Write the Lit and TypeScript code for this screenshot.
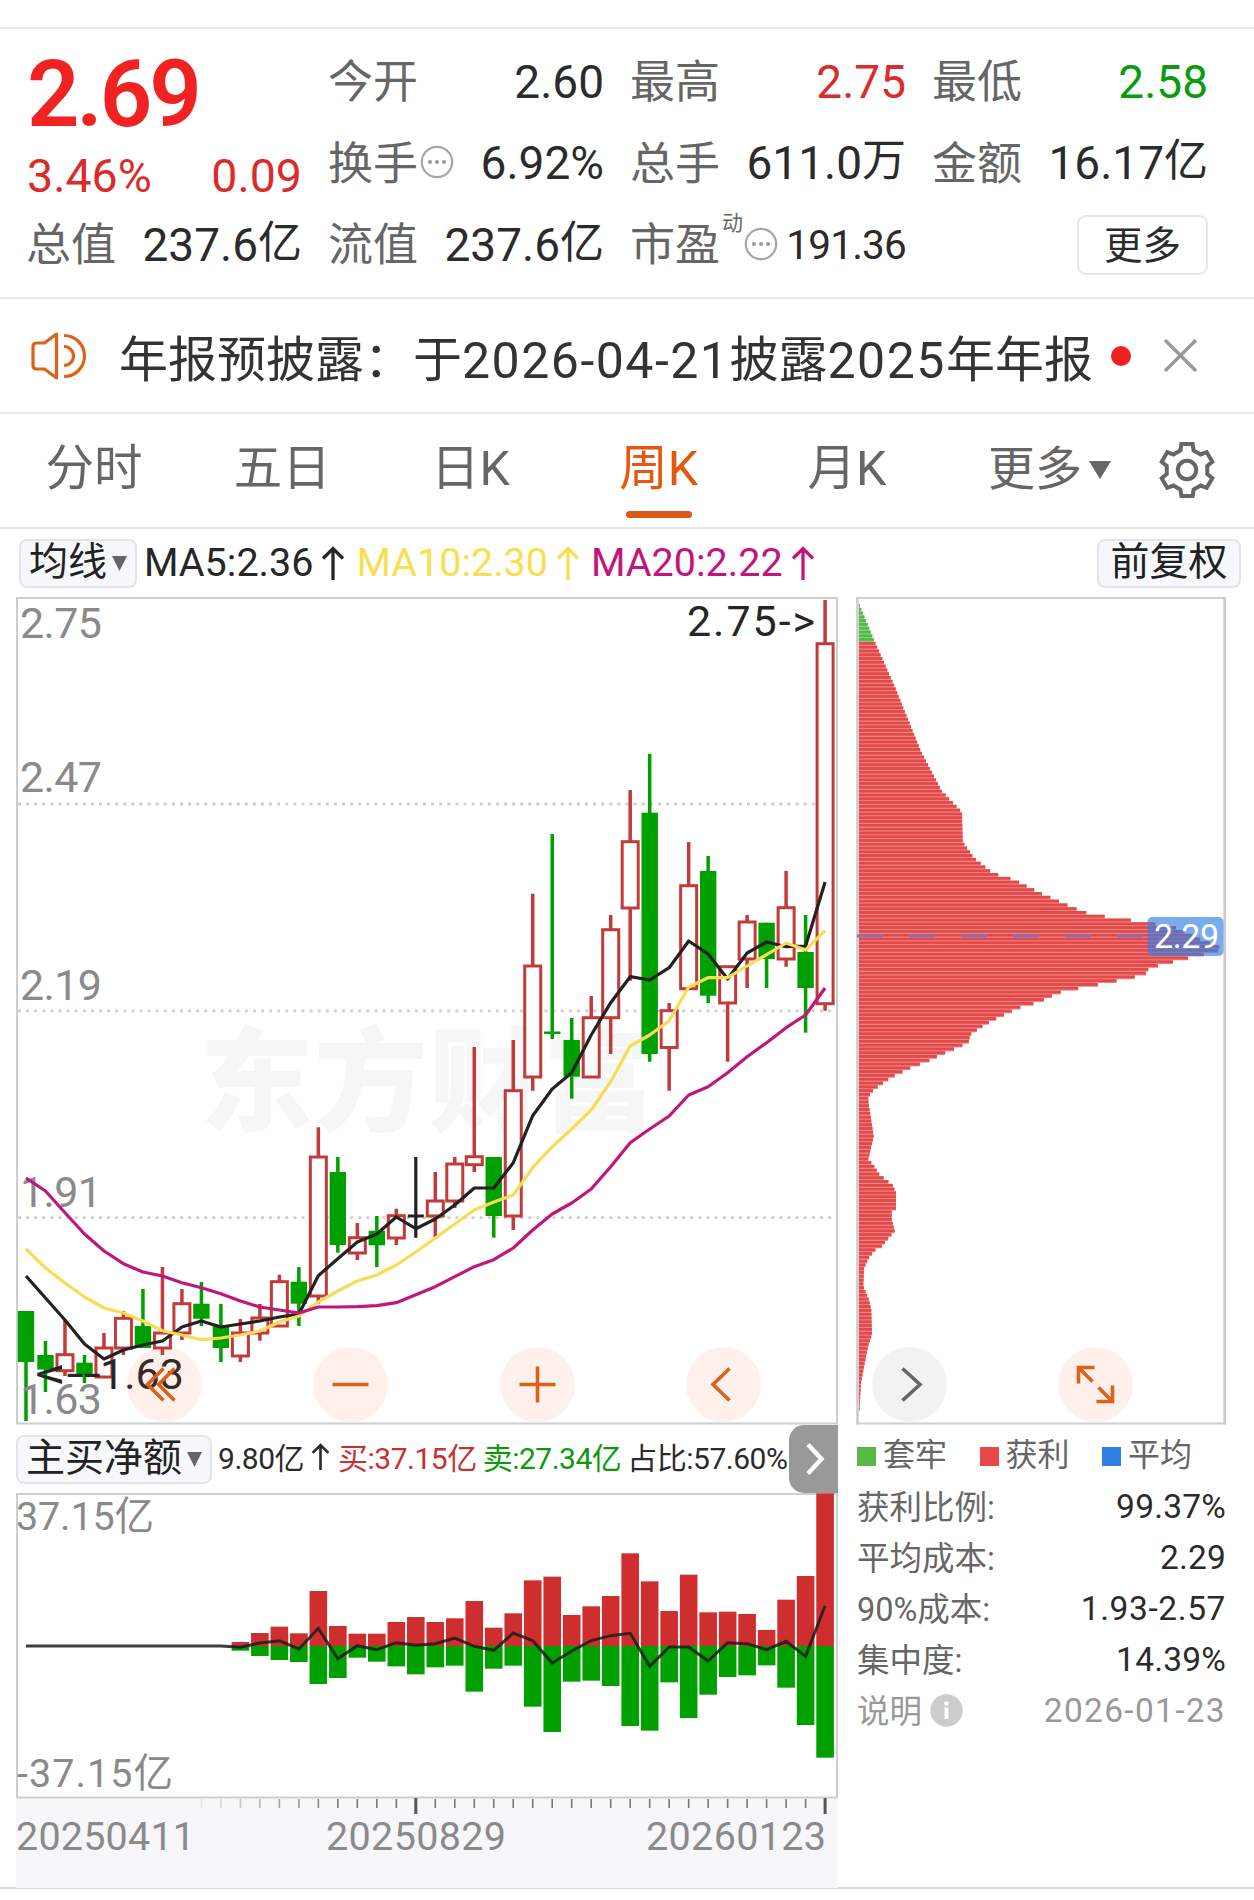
import { LitElement, html, svg, css } from "lit";
import { customElement, property } from "lit/decorators.js";

type Tone = "up" | "down" | "flat";
type Candle = [Tone, number, number, number, number];

const FIRST_X = 26;
const STEP = 19.49;
const xAt = (i: number) => FIRST_X + STEP * i;

/* tone, high, body top, body bottom, low (vertical chart units) */
const CANDLES: Candle[] = [
  ["down", 1311, 1311, 1362, 1421],
  ["down", 1341, 1355, 1369.5, 1392],
  ["up", 1320, 1354.7, 1370.7, 1376],
  ["down", 1355, 1362.7, 1376.7, 1383],
  ["up", 1333, 1348, 1377, 1377],
  ["up", 1311, 1318.3, 1348, 1355],
  ["down", 1289, 1326, 1348, 1348],
  ["up", 1267, 1333, 1348, 1355],
  ["up", 1289, 1303.7, 1333, 1340],
  ["down", 1282, 1303.7, 1318.7, 1326],
  ["down", 1304, 1326, 1348, 1362],
  ["up", 1319, 1333, 1356, 1362],
  ["up", 1304, 1318, 1333, 1340.7],
  ["up", 1274.7, 1281.7, 1326, 1326],
  ["down", 1267, 1281.7, 1303.7, 1326],
  ["up", 1127.3, 1157, 1296, 1303.7],
  ["down", 1157, 1172, 1245, 1252.7],
  ["up", 1223, 1237.7, 1253, 1260],
  ["down", 1216, 1230.7, 1245.3, 1267],
  ["up", 1208.7, 1215.7, 1238, 1245],
  ["flat", 1157, 1216, 1216, 1237.7],
  ["up", 1172, 1201, 1216, 1237.7],
  ["up", 1157, 1164, 1201, 1208],
  ["up", 1047, 1156.7, 1164.7, 1172],
  ["down", 1157, 1157, 1216, 1237.7],
  ["up", 1040, 1090.7, 1216, 1230],
  ["up", 893.7, 966, 1077, 1090.7],
  ["down", 834, 1031.5, 1034, 1039],
  ["down", 1018, 1040, 1076.7, 1098.7],
  ["up", 996, 1017.7, 1077, 1077],
  ["up", 915, 929.7, 1017.7, 1054],
  ["up", 790, 841.7, 908, 980.7],
  ["down", 753.7, 812.7, 1054, 1061.7],
  ["up", 1003, 1010.7, 1047.5, 1090.7],
  ["up", 842, 885.7, 988.7, 988.7],
  ["down", 856, 871, 995.7, 1003],
  ["up", 966.7, 966.7, 1003, 1061.7],
  ["up", 915, 922, 959, 988],
  ["down", 922.7, 922.7, 959, 988],
  ["up", 871, 907.7, 959, 966.7],
  ["down", 915, 952, 988, 1032.7],
  ["up", 600, 643.7, 1003.7, 1010.7],
];

const MA5 = [1276, 1298, 1320, 1344, 1359, 1350, 1345, 1341, 1327, 1321, 1327, 1324, 1321, 1317, 1314, 1275.7, 1258.7, 1242, 1234, 1217, 1228.7, 1219, 1205, 1188, 1188, 1162.7, 1115.7, 1089, 1072.7, 1035, 1002.7, 976.7, 980, 967.7, 941, 954, 979, 953, 942, 946.7, 946, 882];
const MA10 = [1249, 1268, 1283, 1297, 1308, 1313, 1321, 1330.7, 1335, 1339.7, 1338, 1335, 1331, 1322, 1316, 1302, 1291, 1281, 1275, 1265, 1252, 1238, 1224, 1210, 1202, 1195, 1167.7, 1146.7, 1129, 1110, 1081.7, 1046, 1035, 1020.7, 987, 977.7, 977.7, 966, 954.7, 943, 950, 930.7];
const MA20 = [1178, 1191, 1212.7, 1234, 1251, 1263.7, 1272, 1276, 1282.7, 1287.7, 1293.7, 1301, 1307, 1310, 1313, 1307, 1307, 1306.7, 1305.7, 1302.7, 1294.7, 1286.7, 1276.7, 1266.7, 1259.7, 1248, 1230, 1214, 1203, 1189, 1166.7, 1142.7, 1129, 1116, 1095, 1086.7, 1072.7, 1056.7, 1042.7, 1027.7, 1015, 988];

/* height of buys above / sells below the zero line, and the net line, starting at week 11 */
const FLOW_START = 11;
const FLOW: [number, number, number][] = [
  [12, 14, 4], [39, 30, -9], [58, 42, -16], [38, 48, 9], [165, 114, -53], [60, 96, 38],
  [37, 35, -1], [37, 47, 11], [72, 61, -10], [87, 85, -2], [72, 64, -7], [83, 59, -24],
  [135, 137, 1], [55, 68, 13], [98, 59, -39], [197, 182, -16], [208, 258, 51], [93, 107, 15],
  [119, 104, -16], [150, 120, -31], [278, 240, -38], [194, 254, 61], [105, 109, 3], [214, 216, 3],
  [101, 146, 45], [103, 93, -10], [96, 88, -7], [48, 58, 11], [139, 125, -14], [210, 237, 31],
  [458, 335, -121],
];

/* cost profile: level and reach, interpolated per bar */
const PROFILE: [number, number][] = [
  [26, 0], [96, 47], [180, 107], [300, 185], [375, 248], [412, 305], [415, 309], [470, 311],
  [500, 345], [528, 401], [540, 463], [565, 543], [590, 633], [606, 698], [612, 775], [620, 853],
  [628, 943], [640, 985], [655, 1035], [663, 1073], [670, 1093], [677, 1053], [684, 1006],
  [691, 960], [698, 916], [705, 871], [718, 858], [726, 800], [733, 742], [741, 681], [748, 615],
  [755, 588], [762, 563], [769, 541], [776, 495], [783, 468], [797, 421], [811, 378], [825, 345],
  [832, 328], [839, 336], [846, 323], [853, 298], [860, 273], [867, 246], [881, 201], [888, 168],
  [895, 143], [902, 121], [909, 98], [916, 81], [930, 50], [938, 35], [950, 27], [1020, 44],
  [1062, 28], [1075, 45], [1092, 63], [1110, 100], [1125, 111], [1155, 111], [1160, 98],
  [1175, 98], [1196, 107], [1210, 88], [1225, 68], [1232, 48], [1245, 31], [1265, 15],
  [1300, 13], [1325, 30], [1345, 37], [1390, 39], [1410, 28], [1440, 18], [1480, 6], [1530, 1],
];
const LEVEL_SCALE = 1568 / 840;

function reachAt(level: number): number {
  for (let i = 1; i < PROFILE.length; i++) {
    const [l1, r1] = PROFILE[i];
    if (level <= l1) {
      const [l0, r0] = PROFILE[i - 1];
      return r0 + ((r1 - r0) * (level - l0)) / (l1 - l0);
    }
  }
  return 0;
}

const line = (ys: number[]) => ys.map((y, i) => `${xAt(i).toFixed(1)},${y}`).join(" ");

function gearPath(): string {
  const pts: string[] = [];
  for (let k = 0; k < 6; k++) {
    const a = (Math.PI / 3) * k - Math.PI / 2;
    for (const [r, t] of [[19.6, -6.6], [26, -5.6], [26, 5.6], [19.6, 6.6]]) {
      pts.push(`${(29 + r * Math.cos(a) - t * Math.sin(a)).toFixed(2)} ${(29 + r * Math.sin(a) + t * Math.cos(a)).toFixed(2)}`);
    }
  }
  return `M${pts.join("L")}Z`;
}

const base = css`
  :host { display: block; font-family: Roboto, "Noto Sans CJK SC", sans-serif; color: #2b2b2b; }
  svg { display: block; flex: none; }
`;

const more = html`<svg width="34" height="34" viewBox="0 0 34 34">
  <circle cx="17" cy="17" r="15.2" fill="none" stroke="#a6a6a6" stroke-width="2.2"></circle>
  <circle cx="10" cy="17" r="2" fill="#999"></circle><circle cx="17" cy="17" r="2" fill="#999"></circle><circle cx="24" cy="17" r="2" fill="#999"></circle>
</svg>`;

const arrowUp = html`<svg class="arrow" viewBox="0 0 24 34" fill="none" stroke="currentColor" stroke-width="3.3">
  <path d="M12 34V3M2 12.500L12 2.500l10 10"></path>
</svg>`;

const caret = (w: number, h: number) => html`<svg width=${w} height=${h} viewBox="0 0 20 17" preserveAspectRatio="none"><path d="M0 0H20L10 17Z" fill="#666"></path></svg>`;

@customElement("quote-header")
class QuoteHeader extends LitElement {
  static styles = [base, css`
    .grid { display: grid; grid-template-columns: repeat(4, 274px); grid-template-rows: repeat(3, 81.5px); column-gap: 28px; padding: 12px 0 11px 27px; border-bottom: 2px solid #e8e9ea; height: 245px; }
    .cell { display: flex; align-items: center; white-space: nowrap; font-size: 44px; }
    .label { color: #666; font-size: 45px; margin: -6px 2px 0 -1px; }
    .cell svg { margin-top: -2px; }
    .value { margin-left: auto; font-size: 46px; line-height: 54px; margin-right: -1px; }
    .cjk { font-size: 44px; line-height: 0; vertical-align: 3px; }
    .red { color: #dc2b2b; }
    .green { color: #0b9c0b; }
    .price { grid-row: 1 / 3; display: flex; flex-direction: column; }
    .last { font-size: 92px; line-height: 104px; font-weight: 600; color: #f22222; letter-spacing: -3px; margin-top: 2px; }
    .change { display: flex; justify-content: space-between; font-size: 46.5px; line-height: 60px; margin: -1px -1px 0 0; }
    .sup { font-size: 21px; color: #666; align-self: flex-start; margin: 2px 1px 0 0; }
    .small { font-size: 40.5px; letter-spacing: -0.8px; }
    .btn { margin-left: auto; margin-right: -1px; width: 127px; height: 56px; border: 2px solid #e6e7e8; border-radius: 9px; display: flex; align-items: center; justify-content: center; font-size: 38.5px; }
    .btn span { margin-top: -6px; }
  `];
  render() {
    return html`<div class="grid">
      <div class="price"><div class="last">2.69</div><div class="change red"><span>3.46%</span><span>0.09</span></div></div>
      <div class="cell"><span class="label">今开</span><span class="value">2.60</span></div>
      <div class="cell"><span class="label">最高</span><span class="value red">2.75</span></div>
      <div class="cell"><span class="label">最低</span><span class="value green">2.58</span></div>
      <div class="cell"><span class="label">换手</span>${more}<span class="value">6.92%</span></div>
      <div class="cell"><span class="label">总手</span><span class="value">611.0<span class="cjk">万</span></span></div>
      <div class="cell"><span class="label">金额</span><span class="value">16.17<span class="cjk">亿</span></span></div>
      <div class="cell"><span class="label">总值</span><span class="value">237.6<span class="cjk">亿</span></span></div>
      <div class="cell"><span class="label">流值</span><span class="value">237.6<span class="cjk">亿</span></span></div>
      <div class="cell"><span class="label">市盈</span><span class="sup">动</span>${more}<span class="value small">191.36</span></div>
      <div class="cell"><div class="btn"><span>更多</span></div></div>
    </div>`;
  }
}

@customElement("notice-bar")
class NoticeBar extends LitElement {
  static styles = [base, css`
    .bar { display: flex; align-items: center; height: 115px; padding: 0 57px 0 30px; border-bottom: 2px solid #e8e9ea; box-sizing: border-box; }
    .text { font-size: 49px; margin-left: 32px; white-space: nowrap; color: #333; }
    .num { font-size: 50px; letter-spacing: 1.5px; line-height: 0; vertical-align: -1px; }
    .dot { width: 20px; height: 20px; border-radius: 50%; background: #f2201f; margin-left: auto; margin-right: 33px; }
  `];
  render() {
    return html`<div class="bar">
      <svg width="57" height="50" viewBox="0 0 57 50" fill="none" stroke="#de6119" stroke-width="3.200">
        <path d="M26.500 3L14.500 12H6.500Q3 12 3 15.500V34.500Q3 38 6.500 38H14.500L26.500 47Z" stroke-linejoin="round"></path>
        <path d="M34 4.500A20.500 20.500 0 0 1 34 45.500M34 15.500A9.500 9.500 0 0 1 34 34.500"></path>
      </svg>
      <span class="text">年报预披露：于<span class="num">2026-04-21</span>披露<span class="num">2025</span>年年报</span>
      <span class="dot"></span>
      <svg width="33" height="33" viewBox="0 0 33 33" stroke="#999" stroke-width="3.4"><path d="M1 1L32 32M32 1L1 32"></path></svg>
    </div>`;
  }
}

@customElement("period-tabs")
class PeriodTabs extends LitElement {
  static styles = [base, css`
    .tabs { display: flex; height: 115px; border-bottom: 2px solid #e8e9ea; box-sizing: border-box; font-size: 48.500px; color: #666; }
    .tab { width: 188.200px; display: flex; flex-direction: column; align-items: center; padding-top: 20px; line-height: 70px; box-sizing: border-box; }
    .active { color: #e4590f; }
    .mark { width: 66px; height: 7px; border-radius: 4px; background: #de5a12; margin-top: 7px; }
    .more { display: flex; align-items: center; gap: 7px; margin-left: 47px; height: 108px; }
    .more span { margin-top: -7px; font-size: 47px; }
    .more svg { margin-top: 3px; }
    .gear { margin: 27px 0 0 47px; }
  `];
  render() {
    const tabs = ["分时", "五日", "日K", "周K", "月K"];
    return html`<div class="tabs">
      ${tabs.map((t) => t === "周K" ? html`<div class="tab active">${t}<span class="mark"></span></div>` : html`<div class="tab">${t}</div>`)}
      <div class="more"><span>更多</span>${caret(22, 18)}</div>
      <svg class="gear" width="58" height="58" viewBox="0 0 58 58" fill="none" stroke="#666" stroke-width="4">
        <path d=${gearPath()}></path><circle cx="29" cy="29" r="9.200"></circle>
      </svg>
    </div>`;
  }
}

@customElement("chip-button")
class ChipButton extends LitElement {
  @property() label = "";
  @property({ type: Boolean }) caret = false;
  static styles = [base, css`
    .chip { display: flex; align-items: center; gap: 5px; height: 49px; box-sizing: border-box; border: 2px solid #e3e5e8; border-radius: 8px; background: #f7f8fb; padding: 0 8px 0 8px; font-size: 39px; line-height: 43px; letter-spacing: 0; white-space: nowrap; color: #222; }
    .plain { padding: 0 11.500px; }
    .text { margin-top: -1px; }
  `];
  render() {
    return html`<div class=${this.caret ? "chip" : "chip plain"}><span class="text">${this.label}</span>${this.caret ? caret(15, 15) : ""}</div>`;
  }
}

@customElement("price-chart")
class PriceChart extends LitElement {
  static styles = [base, css`
    svg { overflow: visible; }
    text { font-family: Roboto, "Noto Sans CJK SC", sans-serif; font-size: 43px; }
    .axis { fill: #8a8a8a; }
    .note { fill: #262626; }
    .logo { font-family: "Noto Sans CJK SC", sans-serif; font-weight: 900; font-size: 113px; fill: #f6f6f6; }
  `];
  private candle([tone, high, top, bottom, low]: Candle, i: number) {
    const x = xAt(i);
    if (tone === "flat") {
      return svg`<path d="M${x} ${high}V${low}M${x - 8} ${top}H${x + 8}" stroke="#222" stroke-width="3.200"></path>`;
    }
    if (tone === "down") {
      return svg`<path d="M${x} ${high}V${low}" stroke="#00a000" stroke-width="3.500"></path><rect x=${x - 8.2} y=${top} width="16.400" height=${bottom - top} fill="#00a000"></rect>`;
    }
    return svg`<path d="M${x} ${high}V${top}M${x} ${bottom}V${low}" stroke="#c23a3a" stroke-width="3.500"></path><rect x=${x - 8} y=${top} width="16" height=${bottom - top} fill="#fff" stroke="#c23a3a" stroke-width="3"></rect>`;
  }
  render() {
    const labels: [string, number][] = [["2.75", 638], ["2.47", 792], ["2.19", 999.5], ["1.91", 1207], ["1.63", 1413.5]];
    return html`<svg width="822" height="828" viewBox="16 597 822 828">
      <text class="logo" x="200" y="1122" textLength="456">东方财富</text>
      <g stroke="#cfcfcf" stroke-width="2.800" stroke-dasharray="3 5.100"><path d="M18 804H836M18 1010.800H836M18 1217.700H836"></path></g>
      <rect x="17" y="598" width="820" height="825.500" fill="none" stroke="#cecece" stroke-width="2"></rect>
      ${CANDLES.map((c, i) => this.candle(c, i))}
      ${labels.map(([t, y]) => svg`<text class="axis" x="20" y=${y} textLength="82">${t}</text>`)}
      <g fill="none" stroke-width="3.200" stroke-linejoin="round">
        <polyline points=${line(MA5)} stroke="#222"></polyline>
        <polyline points=${line(MA10)} stroke="#f7dd55"></polyline>
        <polyline points=${line(MA20)} stroke="#c0177d"></polyline>
      </g>
      <text class="note" x="687" y="635.500" textLength="128">2.75-&gt;</text>
      <text class="note" x="35" y="1388" textLength="66" lengthAdjust="spacingAndGlyphs">&lt;--</text>
      <text class="note" x="100" y="1388.500" textLength="84">1.63</text>
    </svg>`;
  }
}

@customElement("cost-chart")
class CostChart extends LitElement {
  static styles = [base, css`
    text { font-family: Roboto, sans-serif; font-size: 34px; fill: #fff; }
  `];
  render() {
    const bars = [];
    for (let y = 604; y < 1410; y += 3.79) {
      const w = reachAt((y + 1.5 - 590) * LEVEL_SCALE) / 3;
      bars.push(svg`<rect x="859" y=${y.toFixed(2)} width=${Math.max(w, 0.5).toFixed(1)} height="3.790" fill=${y < 640 ? "#8ed680" : "#f28080"}></rect><rect x="859" y=${y.toFixed(2)} width=${Math.max(w, 0.5).toFixed(1)} height="2.800" fill=${y < 640 ? "#52b94a" : "#e24a4a"}></rect>`);
    }
    return html`<svg width="371" height="828" viewBox="856 597 371 828">
      <path d="M856 598H1226M856 1423.500H1226" stroke="#d0d0d0" stroke-width="2"></path>
      <path d="M857.500 597V1424.500M1224.700 597V1424.500" stroke="#cbcbcb" stroke-width="2.600"></path>
      ${bars}
      <path d="M857 936H1148" stroke="#8a70b0" stroke-width="3" stroke-dasharray="26 26"></path>
      <rect x="1147.500" y="917" width="76" height="39" rx="5" fill="#2f7fe6" fill-opacity=".65"></rect>
      <text x="1154" y="948" textLength="65">2.29</text>
    </svg>`;
  }
}

@customElement("flow-chart")
class FlowChart extends LitElement {
  static styles = [base, css`
    text { font-family: Roboto, "Noto Sans CJK SC", sans-serif; font-size: 39.500px; fill: #8a8a8a; }
  `];
  render() {
    const zero = 1646;
    const net = [...Array(FLOW_START).fill(zero), ...FLOW.map(([, , n]) => zero + n / 3)];
    return html`<svg width="822" height="397" viewBox="16 1493 822 397">
      <rect x="16" y="1798" width="822" height="90" fill="#f7f7fa"></rect>
      <rect x="17" y="1494" width="820" height="303.500" fill="#fff" stroke="#cecece" stroke-width="2"></rect>
      ${FLOW.map(([buy, sell], i) => {
        const x = xAt(i + FLOW_START) - 8.800;
        return svg`<rect x=${x} y=${zero - buy / 3} width="17.600" height=${buy / 3} fill="#cf2e2e"></rect><rect x=${x} y=${zero} width="17.600" height=${sell / 3} fill="#00a000"></rect>`;
      })}
      <polyline points=${line(net)} fill="none" stroke="#1c1c1c" stroke-opacity=".85" stroke-width="3"></polyline>
      ${CANDLES.map((_, i) => i < 9 ? "" : i === 20 || i === 41
        ? svg`<path d="M${xAt(i)} 1798V1814" stroke="#555" stroke-width="3"></path>`
        : svg`<path d="M${xAt(i)} 1799V1808" stroke="#777" stroke-width="1.600" stroke-opacity=${Math.min(1, (i - 8) / 8)}></path>`)}
      <text x="16" y="1530" textLength="138">37.15亿</text>
      <text x="17" y="1787" textLength="156">-37.15亿</text>
      <text x="16" y="1850" textLength="179">20250411</text>
      <text x="326" y="1850" textLength="180">20250829</text>
      <text x="646" y="1850" textLength="180">20260123</text>
    </svg>`;
  }
}

@customElement("cost-stats")
class CostStats extends LitElement {
  static styles = [base, css`
    .legend { display: flex; height: 56px; align-items: center; font-size: 32px; color: #666; padding-top: 1px; box-sizing: border-box; }
    .item { display: flex; align-items: center; width: 122.500px; gap: 7px; }
    .item b { font-weight: 400; margin-top: -3px; }
    .swatch { width: 19px; height: 19px; margin-top: 6px; }
    .trapped { background: #58b947; }
    .profit { background: #e84848; }
    .mean { background: #2f80e4; }
    .row { display: flex; align-items: center; justify-content: space-between; height: 51px; font-size: 32.500px; color: #666; white-space: nowrap; }
    .key { margin-top: -5px; }
    .value { color: #2b2b2b; font-size: 33.500px; letter-spacing: 0.200px; margin-top: -1px; margin-right: -1px; }
    .span { letter-spacing: 0.600px; }
    .date { letter-spacing: 1.300px; }
    .muted, .muted .value { color: #999; }
    .hint { display: flex; align-items: center; gap: 8px; }
  `];
  render() {
    const rows = [["获利比例:", "99.37%"], ["平均成本:", "2.29"], ["90%成本:", "1.93-2.57"], ["集中度:", "14.39%"]];
    return html`
      <div class="legend">
        <div class="item"><span class="swatch trapped"></span><b>套牢</b></div>
        <div class="item"><span class="swatch profit"></span><b>获利</b></div>
        <div class="item"><span class="swatch mean"></span><b>平均</b></div>
      </div>
      ${rows.map(([k, v]) => html`<div class="row"><span class="key">${k}</span><span class=${v.includes("-") ? "value span" : "value"}>${v}</span></div>`)}
      <div class="row muted">
        <span class="hint"><span class="key">说明</span><svg width="33" height="33" viewBox="0 0 33 33"><circle cx="16.500" cy="16.500" r="16.200" fill="#ccc"></circle><circle cx="16.500" cy="9.500" r="2.300" fill="#fff"></circle><path d="M16.500 13.500V25" stroke="#fff" stroke-width="4"></path></svg></span>
        <span class="value date">2026-01-23</span>
      </div>`;
  }
}

@customElement("app-root")
class AppRoot extends LitElement {
  static styles = [base, css`
    :host { width: 1254px; height: 1900px; background: #fff; overflow: hidden; }
    .strip { height: 27px; border-bottom: 2px solid #e8e9ea; }
    .averages { display: flex; align-items: center; height: 68px; padding: 0 13px 0 19px; font-size: 39.500px; white-space: nowrap; box-sizing: border-box; }
    .ma { display: flex; align-items: center; gap: 8px; margin: -1px 11px 0 0; }
    .ma .arrow { width: 24px; height: 34px; }
    .ma5 { margin-left: 7px; color: #262626; }
    .ma10 { color: #f7df50; }
    .ma20 { color: #c3137d; }
    .adjust { margin-left: auto; }
    .body { display: flex; position: relative; align-items: flex-start; padding: 0 27px 0 16px; justify-content: space-between; height: 1290px; border-bottom: 2px solid #dcdcdf; }
    .left { width: 822px; }
    .right { width: 371px; }
    .stats { display: block; padding: 0 2px 0 1px; }
    .flow { display: flex; align-items: center; height: 68px; font-size: 30px; letter-spacing: -0.500px; white-space: nowrap; }
    .flow span { margin-top: -6px; }
    .flow .arrow { width: 19px; height: 27px; margin: 0 8px 0 7px; }
    .net { margin-left: 6px; display: flex; align-items: center; }
    .buy { color: #c93030; }
    .sell { color: #0a9a0a; margin-left: 6px; }
    .ratio { margin-left: 6px; }
    .handle { margin-left: auto; width: 49px; height: 68px; border-radius: 15px 0 0 15px; background: #999; }
    .tools { position: absolute; left: 127px; top: 749.500px; display: flex; gap: 111.300px; }
    .tool { width: 75px; height: 75px; border-radius: 50%; background: rgba(248, 90, 20, 0.085); }
    .grey { background: rgba(0, 0, 0, 0.050); }
  `];
  private tool(d: string, grey = false) {
    return html`<div class=${grey ? "tool grey" : "tool"}><svg width="75" height="75" viewBox="-37.500 -37.500 75 75" fill="none" stroke=${grey ? "#666" : "#de6119"} stroke-width="3.600"><path d=${d}></path></svg></div>`;
  }
  render() {
    return html`
      <div class="strip"></div>
      <quote-header></quote-header>
      <notice-bar></notice-bar>
      <period-tabs></period-tabs>
      <div class="averages">
        <chip-button label="均线" caret></chip-button>
        <span class="ma ma5">MA5:2.36${arrowUp}</span>
        <span class="ma ma10">MA10:2.30${arrowUp}</span>
        <span class="ma ma20">MA20:2.22${arrowUp}</span>
        <chip-button class="adjust" label="前复权"></chip-button>
      </div>
      <div class="body">
        <div class="left">
          <price-chart></price-chart>
          <div class="flow">
            <chip-button label="主买净额" caret></chip-button>
            <span class="net">9.80亿${arrowUp}</span>
            <span class="buy">买:37.15亿</span>
            <span class="sell">卖:27.34亿</span>
            <span class="ratio">占比:57.60%</span>
            <svg class="handle" viewBox="0 0 49 68" fill="none" stroke="#fff" stroke-width="4.500"><path d="M19 19.500L32.500 34L19 48.500"></path></svg>
          </div>
          <flow-chart></flow-chart>
        </div>
        <div class="right">
          <cost-chart></cost-chart>
          <cost-stats class="stats"></cost-stats>
        </div>
        <div class="tools">
          ${this.tool("M-1 -16L-17 0L-1 16M10 -16L-6 0L10 16")}
          ${this.tool("M-18 0H18")}
          ${this.tool("M-18 0H18M0 -18V18")}
          ${this.tool("M6 -16L-10.500 0L6 16")}
          ${this.tool("M-7 -16L10.500 0L-7 16", true)}
          ${this.tool("M-17 -1V-17H-1M-17 -17L-3 -3M17 1V17H1M17 17L3 3")}
        </div>
      </div>`;
  }
}
